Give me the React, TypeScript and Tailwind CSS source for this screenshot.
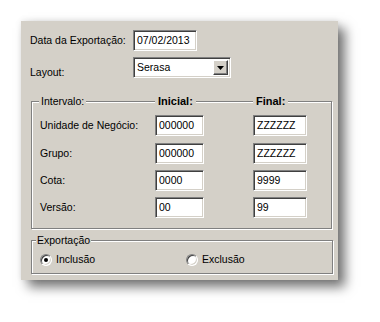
import React from 'react'

const sunken =
  'border border-t-[#808080] border-l-[#808080] border-b-white border-r-white shadow-[inset_1px_1px_0_#404040,inset_-1px_-1px_0_#d4d0c8] bg-white'

function Field({ value, width }: { value: string; width: string }) {
  return (
    <div className={`${sunken} ${width} h-[21px] flex items-center pl-[3px]`}>
      {value}
    </div>
  )
}

function Radio({ checked, label }: { checked?: boolean; label: string }) {
  return (
    <div className="flex items-center gap-[4px]">
      <span className="w-[12px] h-[12px] rounded-full bg-white border border-t-[#808080] border-l-[#808080] border-b-white border-r-white shadow-[inset_1px_1px_0_#404040,inset_-1px_-1px_0_#d4d0c8] flex items-center justify-center">
        {checked && <span className="w-[4px] h-[4px] rounded-full bg-black" />}
      </span>
      <span>{label}</span>
    </div>
  )
}

const rows = [
  { label: 'Unidade de Negócio:', ini: '000000', fim: 'ZZZZZZ' },
  { label: 'Grupo:', ini: '000000', fim: 'ZZZZZZ' },
  { label: 'Cota:', ini: '0000', fim: '9999' },
  { label: 'Versão:', ini: '00', fim: '99' },
]

export default function App() {
  return (
    <div className="w-[380px] h-[322px] bg-white overflow-hidden pt-[21px] pl-[21px] font-['Liberation_Sans',Arial,sans-serif] text-[10.5px] leading-[13px] text-black">
      <div className="w-[317px] h-[259px] bg-[#d4d0c8] shadow-[7px_7px_11px_rgba(0,0,0,0.55),0_-1px_6px_rgba(0,0,0,0.08)] pt-[9px] pl-[9px]">
        {/* Data da exportação */}
        <div className="flex items-center h-[21px]">
          <span className="w-[103px]">Data da Exportação:</span>
          <Field value="07/02/2013" width="w-[64px]" />
        </div>

        {/* Layout */}
        <div className="flex items-start mt-[6px]">
          <span className="w-[103px] mt-[9px]">Layout:</span>
          <div className={`${sunken} w-[98px] h-[21px] flex items-center justify-between pl-[3px] pr-[2px]`}>
            <span>Serasa</span>
            <span className="w-[15px] h-[15px] bg-[#d4d0c8] border border-t-white border-l-white border-b-[#404040] border-r-[#404040] shadow-[inset_-1px_-1px_0_#808080] flex items-center justify-center">
              <svg width="7" height="4" viewBox="0 0 7 4">
                <path d="M0 0h7L3.5 4z" fill="#000" />
              </svg>
            </span>
          </div>
        </div>

        {/* Intervalo */}
        <div className="relative mt-[22px] ml-[1px] w-[301px] h-[128px] border border-[#808080] shadow-[inset_1px_1px_0_#fff,1px_1px_0_#fff] pt-[13px] pl-[8px]">
          <span className="absolute left-[7px] top-[-7px] px-[2px] bg-[#d4d0c8]">Intervalo:</span>
          <span className="absolute left-[123px] top-[-7px] px-[3px] bg-[#d4d0c8] font-bold text-[11px]">Inicial:</span>
          <span className="absolute left-[221px] top-[-7px] px-[3px] bg-[#d4d0c8] font-bold text-[11px]">Final:</span>
          <div className="flex flex-col gap-[6px]">
            {rows.map((r, i) => (
              <div key={r.label} className={`flex items-center ${i === 1 ? 'mt-[1px]' : ''}`}>
                <span className="w-[115px]">{r.label}</span>
                <Field value={r.ini} width="w-[49px]" />
                <div className="w-[49px]" />
                <Field value={r.fim} width="w-[54px]" />
              </div>
            ))}
          </div>
        </div>

        {/* Exportação */}
        <div className="relative mt-[11px] ml-[1px] w-[302px] h-[34px] border border-[#808080] shadow-[inset_1px_1px_0_#fff,1px_1px_0_#fff] pl-[8px] pt-[12px]">
          <span className="absolute left-[4px] top-[-7px] px-[1px] bg-[#d4d0c8]">Exportação</span>
          <div className="flex items-center">
            <div className="w-[146px]">
              <Radio checked label="Inclusão" />
            </div>
            <Radio label="Exclusão" />
          </div>
        </div>
      </div>
    </div>
  )
}
